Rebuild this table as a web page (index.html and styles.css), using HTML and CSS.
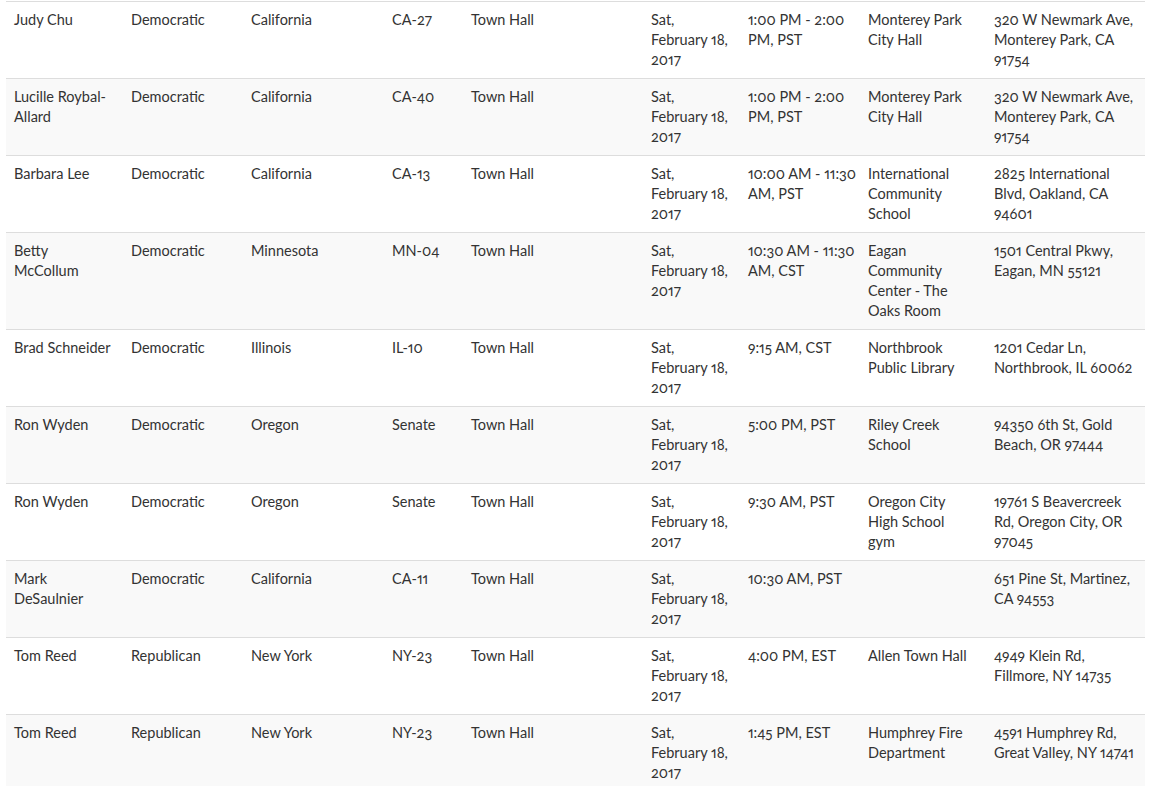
FILE: index.html
```html
<!DOCTYPE html>
<html>
<head>
<meta charset="utf-8">
<link rel="stylesheet" href="styles.css">
</head>
<body>
<table class="events">
<colgroup>
<col class="c-name"><col class="c-party"><col class="c-state"><col class="c-dist"><col class="c-type"><col class="c-date"><col class="c-time"><col class="c-loc"><col class="c-addr">
</colgroup>
<tbody>
<tr><td>Judy Chu</td><td>Democratic</td><td>California</td><td>CA-27</td><td>Town Hall</td><td>Sat, February 18, 2017</td><td class="time">1:00 PM - 2:00 PM, PST</td><td class="loc">Monterey Park City Hall</td><td>320 W Newmark Ave, Monterey Park, CA 91754</td></tr>
<tr><td>Lucille Roybal-Allard</td><td>Democratic</td><td>California</td><td>CA-40</td><td>Town Hall</td><td>Sat, February 18, 2017</td><td class="time">1:00 PM - 2:00 PM, PST</td><td class="loc">Monterey Park City Hall</td><td>320 W Newmark Ave, Monterey Park, CA 91754</td></tr>
<tr><td>Barbara Lee</td><td>Democratic</td><td>California</td><td>CA-13</td><td>Town Hall</td><td>Sat, February 18, 2017</td><td class="time">10:00 AM - 11:30 AM, PST</td><td class="loc">International Community School</td><td>2825 International Blvd, Oakland, CA 94601</td></tr>
<tr><td>Betty McCollum</td><td>Democratic</td><td>Minnesota</td><td>MN-04</td><td>Town Hall</td><td>Sat, February 18, 2017</td><td class="time">10:30 AM - 11:30 AM, CST</td><td class="loc">Eagan Community Center - The Oaks Room</td><td>1501 Central Pkwy, Eagan, MN 55121</td></tr>
<tr><td>Brad Schneider</td><td>Democratic</td><td>Illinois</td><td>IL-10</td><td>Town Hall</td><td>Sat, February 18, 2017</td><td class="time">9:15 AM, CST</td><td class="loc">Northbrook Public Library</td><td>1201 Cedar Ln, Northbrook, IL 60062</td></tr>
<tr><td>Ron Wyden</td><td>Democratic</td><td>Oregon</td><td>Senate</td><td>Town Hall</td><td>Sat, February 18, 2017</td><td class="time">5:00 PM, PST</td><td class="loc">Riley Creek School</td><td>94350 6th St, Gold Beach, OR 97444</td></tr>
<tr><td>Ron Wyden</td><td>Democratic</td><td>Oregon</td><td>Senate</td><td>Town Hall</td><td>Sat, February 18, 2017</td><td class="time">9:30 AM, PST</td><td class="loc">Oregon City High School gym</td><td>19761 S Beavercreek Rd, Oregon City, OR 97045</td></tr>
<tr><td>Mark DeSaulnier</td><td>Democratic</td><td>California</td><td>CA-11</td><td>Town Hall</td><td>Sat, February 18, 2017</td><td class="time">10:30 AM, PST</td><td class="loc"></td><td>651 Pine St, Martinez, CA 94553</td></tr>
<tr><td>Tom Reed</td><td>Republican</td><td>New York</td><td>NY-23</td><td>Town Hall</td><td>Sat, February 18, 2017</td><td class="time">4:00 PM, EST</td><td class="loc">Allen Town Hall</td><td>4949 Klein Rd, Fillmore, NY 14735</td></tr>
<tr><td>Tom Reed</td><td>Republican</td><td>New York</td><td>NY-23</td><td>Town Hall</td><td>Sat, February 18, 2017</td><td class="time">1:45 PM, EST</td><td class="loc">Humphrey Fire Department</td><td>4591 Humphrey Rd, Great Valley, NY 14741</td></tr>
</tbody>
</table>
</body>
</html>
```

FILE: styles.css
```css
html, body {
  margin: 0;
  padding: 0;
  background: #fff;
}
body {
  padding: 1px 6px 0 6px;
  font-family: Lato, "Open Sans", sans-serif;
  font-size: 14.5px;
  line-height: 20px;
  color: #333;
  font-variant-numeric: oldstyle-nums proportional-nums;
}
.events {
  width: 1139px;
  border-collapse: collapse;
  border-spacing: 0;
  table-layout: fixed;
}
.events td {
  padding: 8px;
  vertical-align: top;
  border-top: 1px solid #ddd;
  text-align: left;
}
.events td.time {
  padding-right: 3px;
}
.events td.loc {
  padding-right: 14px;
}
.events tr:nth-child(even) td {
  background: #f9f9f9;
}
.c-name { width: 117px; }
.c-party { width: 120px; }
.c-state { width: 141px; }
.c-dist { width: 79px; }
.c-type { width: 180px; }
.c-date { width: 97px; }
.c-time { width: 120px; }
.c-loc { width: 126px; }
.c-addr { width: 159px; }
```
